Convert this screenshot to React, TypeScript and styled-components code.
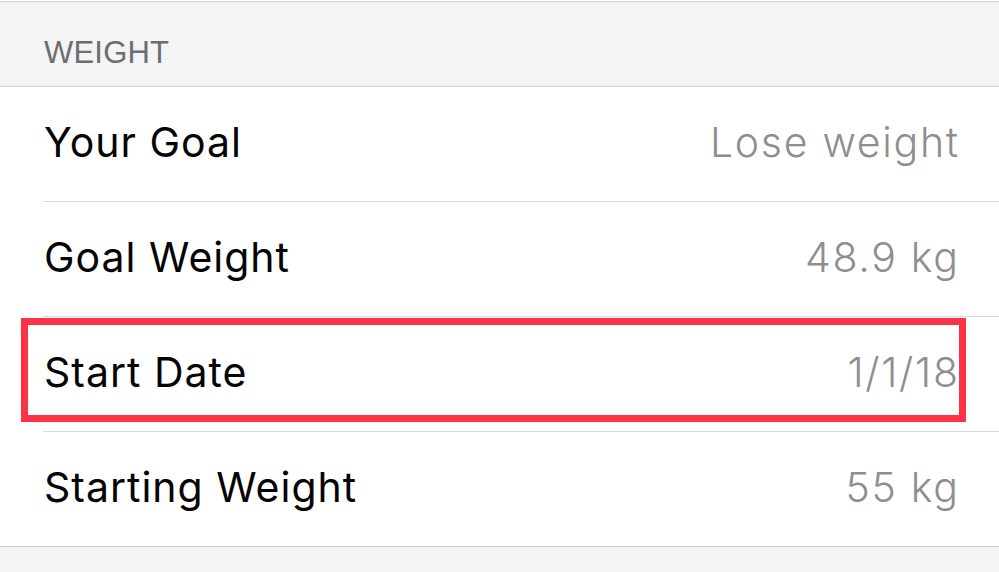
import * as React from "react";
import styled, { createGlobalStyle } from "styled-components";

const GlobalStyle = createGlobalStyle`
  html, body {
    margin: 0;
    padding: 0;
    background: #ffffff;
  }
  #root {
    min-height: 100vh;
    display: flex;
    flex-direction: column;
  }
`;

const SPage = styled.div`
  flex: 1;
  display: flex;
  flex-direction: column;
  padding-top: 1px;
  font-family: "Inter", "Lato", sans-serif;
`;

const SSectionHeader = styled.div`
  height: 84px;
  box-sizing: content-box;
  padding: 0 44px;
  background: #f4f4f4;
  border-top: 1px solid #cfcfcf;
  border-bottom: 1px solid #cfcfcf;
  display: flex;
  align-items: flex-start;
`;

const SSectionTitle = styled.span`
  margin-top: 35px;
  font-family: "Liberation Sans", Arial, sans-serif;
  font-size: 31px;
  line-height: 1;
  color: #6d6d72;
  letter-spacing: 0.2px;
`;

const SList = styled.div`
  background: #ffffff;
  border-bottom: 1px solid #cfcfcf;
`;

interface IRowProps {
  last?: boolean;
}

const SRow = styled.div<IRowProps>`
  position: relative;
  height: 114px;
  padding: 0 41px 4px 44px;
  box-sizing: border-box;
  display: flex;
  align-items: center;
  justify-content: space-between;

  &::after {
    content: "";
    display: ${(props) => (props.last ? "none" : "block")};
    position: absolute;
    left: 43px;
    right: 0;
    bottom: -1px;
    height: 1px;
    background: #dadada;
  }
  & + & {
    margin-top: 1px;
  }
`;

const SLabel = styled.span`
  font-size: 41px;
  font-weight: 400;
  letter-spacing: 1px;
  color: #050505;
`;

const SValue = styled.span`
  font-size: 41px;
  font-weight: 300;
  letter-spacing: 1.7px;
  margin-right: -1.7px;
  color: #8e8e8e;
`;

const SHighlight = styled.div`
  position: absolute;
  left: 21px;
  right: 33px;
  top: 1px;
  bottom: 9px;
  border: 7px solid #fc3346;
  pointer-events: none;
`;

const SFooter = styled.div`
  flex: 1;
  background: #f4f4f4;
`;

const rows = [
  { label: "Your Goal", value: "Lose weight" },
  { label: "Goal Weight", value: "48.9 kg" },
  { label: "Start Date", value: "1/1/18", highlight: true },
  { label: "Starting Weight", value: "55 kg" },
];

const App = () => {
  return (
    <SPage>
      <GlobalStyle />
      <SSectionHeader>
        <SSectionTitle>WEIGHT</SSectionTitle>
      </SSectionHeader>
      <SList>
        {rows.map((row, index) => (
          <SRow key={row.label} last={index === rows.length - 1}>
            <SLabel>{row.label}</SLabel>
            <SValue>{row.value}</SValue>
            {row.highlight && <SHighlight />}
          </SRow>
        ))}
      </SList>
      <SFooter />
    </SPage>
  );
};

export default App;
